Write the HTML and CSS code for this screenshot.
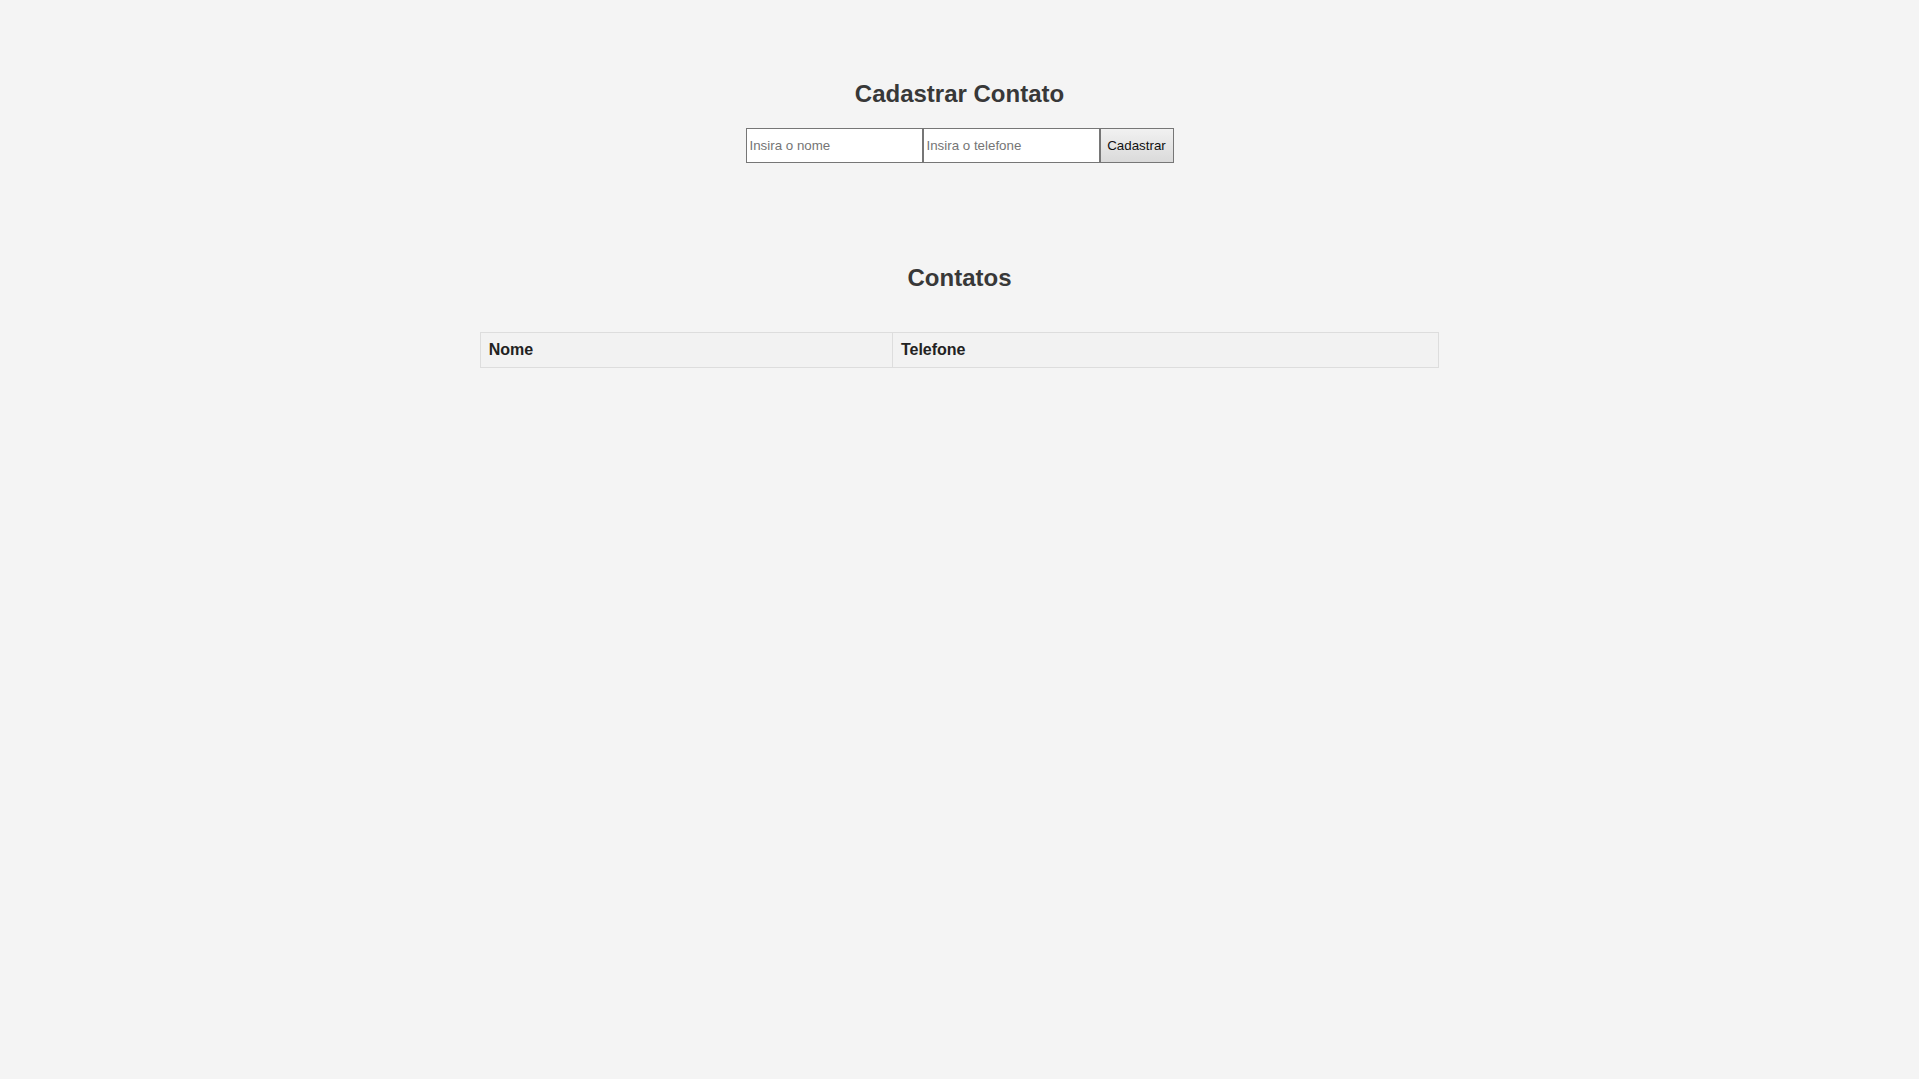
FILE: index.html
```html
<!DOCTYPE html>
<html lang="pt-BR">
<head>
<meta charset="utf-8">
<title>Contatos</title>
<link rel="stylesheet" href="styles.css">
</head>
<body>
<main class="page">
  <section class="cadastro">
    <h2 class="title">Cadastrar Contato</h2>
    <form class="form" onsubmit="return false;">
      <input class="field" type="text" placeholder="Insira o nome"><input class="field" type="text" placeholder="Insira o telefone"><button class="btn" type="submit">Cadastrar</button>
    </form>
  </section>
  <section class="lista">
    <h2 class="title">Contatos</h2>
    <table class="tabela">
      <thead>
        <tr><th class="col-nome">Nome</th><th>Telefone</th></tr>
      </thead>
      <tbody></tbody>
    </table>
  </section>
</main>
</body>
</html>
```
FILE: styles.css
```css
html, body {
  margin: 0;
  padding: 0;
  background: #f4f4f4;
}
body {
  font-family: "Liberation Sans", Arial, sans-serif;
  color: #333;
}
.page {
  padding-top: 80px;
  display: flex;
  flex-direction: column;
  align-items: center;
}
.title {
  margin: 0;
  font-size: 24px;
  line-height: 27px;
  font-weight: bold;
  color: #383838;
  text-align: center;
}
.cadastro {
  display: flex;
  flex-direction: column;
  align-items: center;
}
.form {
  display: flex;
  margin-top: 21px;
}
.field {
  box-sizing: border-box;
  width: 177px;
  height: 35px;
  margin: 0;
  padding: 0 3px;
  border: 1px solid #767676;
  background: #fff;
  font-family: "Liberation Sans", Arial, sans-serif;
  font-size: 13.33px;
  color: #222;
  outline: none;
}
.field::placeholder {
  color: #757575;
}
.btn {
  box-sizing: border-box;
  width: 74px;
  height: 35px;
  margin: 0;
  padding: 0 6px;
  border: 1px solid #767676;
  background: linear-gradient(#f1f1f1, #dadada);
  font-family: "Liberation Sans", Arial, sans-serif;
  font-size: 13.33px;
  color: #111;
}
.lista {
  margin-top: 101px;
  width: 50%;
  display: flex;
  flex-direction: column;
  align-items: stretch;
}
.tabela {
  margin-top: 41px;
  width: 100%;
  border-collapse: collapse;
}
.tabela th {
  border: 1px solid #ddd;
  background: #f2f2f2;
  padding: 8px;
  text-align: left;
  font-size: 16px;
  line-height: 18px;
  font-weight: bold;
  color: #222;
}
.col-nome {
  width: 43%;
}
```
